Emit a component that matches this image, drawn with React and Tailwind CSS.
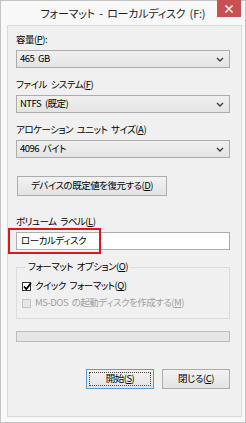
import React from "react";

const Mn = ({ children }) => <span className="underline underline-offset-1">{children}</span>;

const Chevron = () => (
  <svg width="8" height="5" viewBox="0 0 8 5" className="shrink-0">
    <path d="M1 1 L4 4 L7 1" fill="none" stroke="#3c3c3c" strokeWidth="1.4" />
  </svg>
);

const Label = ({ children, className = "" }) => (
  <div className={`h-[14px] flex items-center leading-none ${className}`}>{children}</div>
);

const Select = ({ value, className = "" }) => (
  <div
    className={`h-[18px] flex items-center justify-between pl-[3px] pr-[5px] border border-[#acacac] bg-gradient-to-b from-[#f0f0f0] to-[#e4e4e4] leading-none ${className}`}
  >
    <span>{value}</span>
    <Chevron />
  </div>
);

const Checkbox = ({ checked, disabled }) => (
  <span
    className={`relative w-[9px] h-[9px] shrink-0 border ${
      disabled ? "border-[#c4c4c4] bg-[#e6e6e6]" : "border-[#333] bg-white"
    }`}
  >
    {checked && (
      <svg width="11" height="11" viewBox="0 0 11 11" className="absolute -left-[1px] -top-[2px]">
        <path d="M2 5.5 L4.3 8 L9 2" fill="none" stroke="#000" strokeWidth="1.8" />
      </svg>
    )}
  </span>
);

const Button = ({ children, primary, className = "" }) => (
  <div
    className={`h-[20px] flex items-center justify-center border bg-gradient-to-b from-[#f2f2f2] to-[#e3e3e3] leading-none ${
      primary ? "border-[#5a9bd5] p-[2px]" : "border-[#acacac]"
    } ${className}`}
  >
    {primary ? (
      <span className="w-full h-full flex items-center justify-center border border-dotted border-[#444]">
        {children}
      </span>
    ) : (
      children
    )}
  </div>
);

export default function App() {
  return (
    <div className="w-[246px] h-[423px] border border-[#c4c4c4] bg-[#f8f8f8] flex flex-col text-[9.5px] tracking-[-0.5px] [word-spacing:2px] text-black font-['Noto_Sans_CJK_JP',sans-serif] [font-feature-settings:'palt']">
      <div className="relative h-[24px] flex items-center justify-center text-[11px] tracking-[-0.2px] text-[#1e1e1e] leading-none">
        フォーマット - ローカルディスク (F:)
        <div className="absolute right-[4px] -top-[1px] w-[24px] h-[17px] bg-[#c75050] flex items-center justify-center text-white text-[12px] font-bold">
          ×
        </div>
      </div>

      <div className="flex-1 ml-[6px] mr-[3px] mb-[5px] border border-[#d9d9d9] bg-[#f0f0f0] pl-[8px] pr-[11px] flex flex-col">
        <Label className="mt-[7px]">
          容量(<Mn>P</Mn>):
        </Label>
        <Select className="mt-[3px]" value="465 GB" />

        <Label className="mt-[10px]">
          ファイル システム(<Mn>F</Mn>)
        </Label>
        <Select className="mt-[3px]" value="NTFS (既定)" />

        <Label className="mt-[10px]">
          アロケーション ユニット サイズ(<Mn>A</Mn>)
        </Label>
        <Select className="mt-[3px]" value="4096 バイト" />

        <Button className="mt-[18px] ml-[1px] w-[150px]">
          デバイスの既定値を復元する(<Mn>D</Mn>)
        </Button>

        <Label className="mt-[19px]">
          ボリューム ラベル(<Mn>L</Mn>)
        </Label>
        <div className="relative mt-[3px]">
          <div className="h-[18px] flex items-center pl-[4px] border border-[#abadb3] bg-white leading-none">
            ローカルディスク
          </div>
          <div className="absolute -left-[8px] -top-[4px] w-[93px] h-[26px] border-2 border-[#e0141e]" />
        </div>

        <fieldset className="mt-[10px] border border-[#dcdcdc] pl-[5px] pb-[7px] m-0">
          <legend className="ml-[4px] px-[2px] h-[14px] flex items-center leading-none">
            フォーマット オプション(<Mn>O</Mn>)
          </legend>
          <div className="mt-[4px] h-[16px] flex items-center gap-[4px] leading-none">
            <Checkbox checked />
            <span>
              クイック フォーマット(<Mn>Q</Mn>)
            </span>
          </div>
          <div className="mt-[1px] h-[16px] flex items-center gap-[4px] leading-none text-[#a0a0a0]">
            <Checkbox disabled />
            <span>
              MS-DOS の起動ディスクを作成する(<Mn>M</Mn>)
            </span>
          </div>
        </fieldset>

        <div className="mt-[12px] h-[11px] border border-[#bcbcbc] bg-[#e6e6e6]" />

        <div className="mt-[27px] flex justify-end gap-[8px]">
          <Button primary className="w-[68px]">
            開始(<Mn>S</Mn>)
          </Button>
          <Button className="w-[68px]">
            閉じる(<Mn>C</Mn>)
          </Button>
        </div>
      </div>
    </div>
  );
}
